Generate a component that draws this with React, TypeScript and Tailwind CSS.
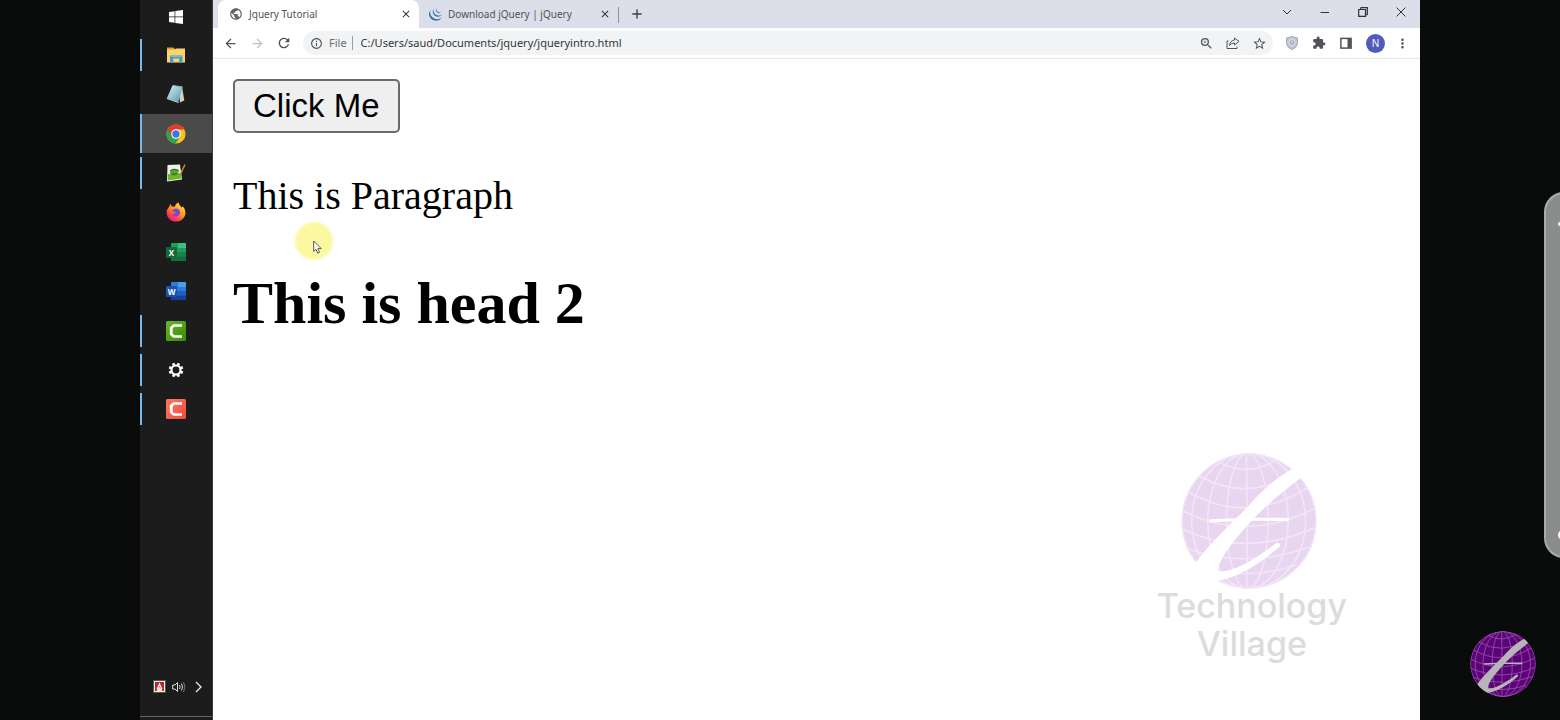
import type { ReactNode } from "react";
import {
  MdArrowBack,
  MdArrowForward,
  MdAdd,
  MdClose,
  MdExtension,
  MdInfoOutline,
  MdMoreVert,
  MdPublic,
  MdRefresh,
  MdStarBorder,
  MdZoomIn,
} from "react-icons/md";
import { SiJquery } from "react-icons/si";

const WindowsIcon = () => (
  <svg viewBox="0 0 14 14" className="size-3.5" fill="#fff">
    <path d="M0 2 5.6 1.2V6.6H0ZM6.3 1.1 14 0V6.6H6.3ZM0 7.3H5.6V12.8L0 12ZM6.3 7.3H14V14L6.3 12.9Z" />
  </svg>
);

const FolderIcon = () => (
  <svg viewBox="0 0 20 18" className="h-[18px] w-5">
    <path d="M1 1.5H7.5L9.5 3.5H18.5V7H1Z" fill="#e0a030" />
    <path d="M1 3.5H9L10 2.5H19V16.5H1Z" fill="#fcd364" />
    <path d="M4 17V9.5H16.5V17H13.2V12.6H7.3V17Z" fill="#4a9cbc" />
    <path d="M5 9.5H15.5V11H5Z" fill="#77bcd3" />
  </svg>
);

const NotepadIcon = () => (
  <svg viewBox="0 0 20 20" className="size-5">
    <defs>
      <linearGradient id="pad" x1="0" y1="0" x2="1" y2="1">
        <stop offset="0" stopColor="#d9f1f5" />
        <stop offset="1" stopColor="#4d98ad" />
      </linearGradient>
    </defs>
    <path d="M16 2.5 18.3 16.5 14 18.5 13 9Z" fill="#d6d0bd" />
    <path d="M6.5 1.5 16.5 3 12.5 18 1 14Z" fill="url(#pad)" />
    <path d="M1 14 12.5 18V19L1 15Z" fill="#e4e4dc" />
    <path d="M7 1.5 16.5 3" stroke="#a9b7b8" />
  </svg>
);

const ChromeIcon = () => (
  <svg viewBox="0 0 48 48" className="size-5">
    <circle cx="24" cy="24" r="23" fill="#fbc116" />
    <path d="M24 24 34 29.7 23 47A23 23 0 0 1 4 12.6Z" fill="#2da44e" />
    <path d="M4 12.6A23 23 0 0 1 44 13H24L14 29.7Z" fill="#e33b2e" />
    <circle cx="24" cy="24" r="11.5" fill="#fff" />
    <circle cx="24" cy="24" r="8.8" fill="#3478e5" />
  </svg>
);

const NotepadPlusIcon = () => (
  <svg viewBox="0 0 20 20" className="size-5">
    <path d="M1.5 2 14 1.5 16 16.5 1 18.5Z" fill="#eef1e8" />
    <path d="M2 11 15 10 15.4 15.5 1.8 17.5Z" fill="#70b52b" />
    <path d="M4 8C6 5 11 5 13 8L11 12C8 14 5 13 4 10Z" fill="#5ea637" />
    <path d="M4.5 7.5Q8 5 12.5 7.5M6 11H11" stroke="#2b5c1d" fill="none" />
    <path d="M19 1.5 14 12" stroke="#d4882b" strokeWidth="1.5" />
  </svg>
);

const FirefoxIcon = () => (
  <svg viewBox="0 0 20 20" className="size-5">
    <defs>
      <linearGradient id="fox" x1=".85" y1=".05" x2=".2" y2="1">
        <stop offset="0" stopColor="#ffe33e" />
        <stop offset=".45" stopColor="#ff9320" />
        <stop offset=".75" stopColor="#ff3b4e" />
        <stop offset="1" stopColor="#df158e" />
      </linearGradient>
    </defs>
    <path
      d="M3.5 4.5C3.4 3.5 4 2.3 4.4 2L6 4.7C7.3 4.3 8 4.4 8.8 4.8C9.3 2.8 10.8.8 12.6.5C12.8 2.8 14.5 3.7 16 5.8L16.6 4.3C18.7 6.3 19.7 9 19.4 11.7C18.7 16.4 14.7 19.6 10 19.6C4.8 19.6.6 15.5.6 10.4C.6 8.2 1.7 5.9 3.5 4.5Z"
      fill="url(#fox)"
    />
    <path d="M6 9.2C7 6.6 10.5 5.6 12.8 7.4C15 9.4 14.2 13 11.4 14.2C8.8 15 6.7 13.7 6.1 11.7C7.7 12.4 9 11.6 9.7 10.8C8.8 10 7.5 9.7 6 9.2Z" fill="#8044d3" />
  </svg>
);

function OfficeIcon({ letter, tones }: { letter: string; tones: string[] }) {
  return (
    <svg viewBox="0 0 20 20" className="size-5">
      <rect x="5" y="1" width="15" height="18" rx="1" fill={tones[0]} />
      <path d="M12 1H19Q20 1 20 2V6H12Z" fill={tones[1]} />
      <path d="M5 10H20V14.5H5Z" fill={tones[2]} />
      <path d="M5 14.5H20V18Q20 19 19 19H6Q5 19 5 18Z" fill={tones[3]} />
      <rect y="5" width="11" height="11" rx="1" fill={tones[4]} />
      <text x="5.5" y="13.5" textAnchor="middle" fontFamily="Open Sans, sans-serif" fontWeight="700" fontSize="8" fill="#fff">
        {letter}
      </text>
    </svg>
  );
}

function CamtasiaIcon({ from, to }: { from: string; to: string }) {
  return (
    <svg viewBox="0 0 20 20" className="size-5">
      <defs>
        <linearGradient id={"cam" + from.slice(1)} x1="0" y1="0" x2="1" y2="1">
          <stop offset="0" stopColor={from} />
          <stop offset="1" stopColor={to} />
        </linearGradient>
      </defs>
      <rect width="20" height="20" rx="1.5" fill={"url(#cam" + from.slice(1) + ")"} />
      <path d="M16 3.2V5.8H8.2L6.6 7.4V12.6L8.2 14.2H16V16.8H7.2L3.8 13.4V6.6L7.2 3.2Z" fill="#fff" />
    </svg>
  );
}

const GearIcon = () => (
  <svg viewBox="0 0 20 20" className="size-[18px]" fill="none" stroke="#fff">
    <circle cx="10" cy="10" r="5" strokeWidth="2.4" />
    <g strokeWidth="3">
      {[22.5, 67.5, 112.5, 157.5, 202.5, 247.5, 292.5, 337.5].map((a) => (
        <path key={a} d="M10 1.8V4.8" transform={`rotate(${a} 10 10)`} />
      ))}
    </g>
  </svg>
);

type App = { name: string; icon: ReactNode; running?: boolean; active?: boolean };

const apps: App[] = [
  { name: "File Explorer", icon: <FolderIcon />, running: true },
  { name: "Notepad", icon: <NotepadIcon /> },
  { name: "Chrome", icon: <ChromeIcon />, running: true, active: true },
  { name: "Notepad++", icon: <NotepadPlusIcon />, running: true },
  { name: "Firefox", icon: <FirefoxIcon /> },
  { name: "Excel", icon: <OfficeIcon letter="X" tones={["#219b5f", "#36c282", "#16834a", "#176b40", "#13683c"]} /> },
  { name: "Word", icon: <OfficeIcon letter="W" tones={["#2f7bd6", "#46a0ec", "#1f5fc0", "#163f96", "#1b53b4"]} /> },
  { name: "Camtasia", icon: <CamtasiaIcon from="#6ab52a" to="#3a8a04" />, running: true },
  { name: "Settings", icon: <GearIcon />, running: true },
  { name: "Recorder", icon: <CamtasiaIcon from="#ff7a63" to="#f04a3c" />, running: true },
];

function Taskbar() {
  return (
    <nav aria-label="Taskbar" className="flex w-[73px] shrink-0 flex-col border-r border-[#3c3c3c] bg-[#1c1c1c]">
      <button aria-label="Start" className="flex h-[35px] items-center justify-center pb-0.5">
        <WindowsIcon />
      </button>
      <div className="flex h-[394px] flex-col">
        {apps.map((a) => (
          <button
            key={a.name}
            aria-label={a.name}
            className={`flex flex-1 items-center ${a.active ? "bg-[#4a4a4a]" : ""}`}
          >
            <span className={`w-0.5 ${a.active ? "h-full" : "h-8"} ${a.running ? "bg-[#76b9ed]" : ""}`} />
            <span className="flex flex-1 justify-center pr-0.5">{a.icon}</span>
          </button>
        ))}
      </div>
      <div className="mt-auto mb-[3px] flex h-[42px] items-start justify-end gap-1.5 border-b border-[#666] pt-[5px] pr-1.5">
        <svg viewBox="0 0 13 13" className="size-[13px]">
          <rect width="13" height="13" fill="#2c6b47" />
          <rect x="1" y="1" width="11" height="11" fill="#f3e9e6" />
          <path d="M2 2H11V11H9.3L6.5 6.5 3.7 11H2Z" fill="#c3202a" />
          <path d="M4 9.5 6.5 4 9 9.5" fill="none" stroke="#fff" strokeWidth="1.2" />
        </svg>
        <svg viewBox="0 0 14 14" className="size-3.5" fill="none" stroke="#ddd">
          <path d="M.7 5H3L5.5 2.5V11.5L3 9H.7Z" />
          <path d="M7.5 5Q8.8 7 7.5 9M9.5 3.5Q11.6 7 9.5 10.5" />
          <path d="M11.5 2Q14.4 7 11.5 12" stroke="#777" />
        </svg>
        <svg viewBox="0 0 14 14" className="size-3.5" fill="none" stroke="#eee" strokeWidth="1.3">
          <path d="M4 2 9 7 4 12" />
        </svg>
      </div>
    </nav>
  );
}

function Globe({ id, fill, line, mark, className }: { id: string; fill: string; line: string; mark: string; className: string }) {
  return (
    <svg viewBox="130 40 406 406" className={className}>
      <clipPath id={id}>
        <circle cx="333" cy="243" r="202" />
      </clipPath>
      <g clipPath={`url(#${id})`}>
        <circle cx="333" cy="243" r="202" fill={fill} />
        <g fill="none" stroke={line} strokeWidth="5">
          <circle cx="333" cy="243" r="200" />
          <path d="M325 43Q329 240 326 445" />
          <ellipse cx="328" cy="243" rx="62" ry="202" />
          <ellipse cx="330" cy="243" rx="120" ry="202" />
          <ellipse cx="332" cy="243" rx="170" ry="202" />
          <path d="M240 65Q325 115 415 60" />
          <path d="M183 108Q325 188 470 100" />
          <path d="M150 155Q325 257 505 145" />
          <path d="M134 212Q325 310 530 205" />
          <path d="M134 268Q325 355 532 262" />
          <path d="M146 325Q325 389 515 320" />
          <path d="M190 382Q325 422 475 375" />
        </g>
        <path
          d="M468 84C400 122 365 160 330 200C280 250 220 305 172 370L145 415L220 460L236 422C300 412 360 375 424 320Q430 308 416 308C360 350 320 376 280 388C250 396 240 396 241 385C250 345 290 300 325 260C355 225 400 180 496 108Z"
          fill={mark}
        />
        <path d="M216 238C290 233 380 232 450 234Q456 239 450 244C380 241 290 242 218 248Q212 243 216 238Z" fill={mark} />
      </g>
    </svg>
  );
}

function Tab({ title, icon, active, className }: { title: string; icon: ReactNode; active?: boolean; className: string }) {
  return (
    <div className={`flex items-center ${active ? "rounded-t-lg bg-white" : ""} ${className}`}>
      {icon}
      <span className="flex-1 text-[10px] whitespace-nowrap text-[#505357]">{title}</span>
      <button aria-label={`Close ${title}`}>
        <MdClose className="size-3 text-[#333]" />
      </button>
    </div>
  );
}

function TabStrip() {
  return (
    <div className="flex h-7 bg-[#dcdfe9] pl-[5px]">
      <Tab
        title="Jquery Tutorial"
        active
        icon={<MdPublic className="mr-1.5 size-3.5 text-[#5f6368]" />}
        className="w-[201px] pr-[7px] pl-[11px]"
      />
      <Tab
        title="Download jQuery | jQuery"
        icon={<SiJquery className="mr-1.5 size-[13px] text-[#2a73b0]" />}
        className="w-[199px] pr-[7px] pl-2.5"
      />
      <span className="mt-[7px] h-4 w-px bg-[#8d9097]" />
      <button aria-label="New tab" className="pl-2.5">
        <MdAdd className="size-4 text-[#3c4043]" />
      </button>
      <div className="ml-auto flex items-center gap-7 pr-3.5 pb-1 text-[#333]">
        <button aria-label="Search tabs">
          <svg viewBox="0 0 10 10" className="size-2.5" fill="none" stroke="currentColor">
            <path d="M1 3 5 7 9 3" />
          </svg>
        </button>
        <button aria-label="Minimize">
          <svg viewBox="0 0 10 10" className="size-2.5" fill="none" stroke="currentColor">
            <path d="M.5 5.5H9" />
          </svg>
        </button>
        <button aria-label="Restore">
          <svg viewBox="0 0 10 10" className="size-2.5" fill="none" stroke="currentColor" strokeWidth="1.2">
            <path d="M.7 2.5H7.5V9.3H.7ZM2.5 2.5 3 .7H9.3V7.5L7.5 8" />
          </svg>
        </button>
        <button aria-label="Close window">
          <svg viewBox="0 0 10 10" className="size-2.5" fill="none" stroke="currentColor">
            <path d="M.5.5 9.5 9.5M9.5.5.5 9.5" />
          </svg>
        </button>
      </div>
    </div>
  );
}

function Toolbar() {
  return (
    <div className="flex h-[31px] items-center border-b border-[#e6e7e9] pl-2.5 text-[#505357]">
      <button aria-label="Back" className="mr-3">
        <MdArrowBack className="size-[15px]" />
      </button>
      <button aria-label="Forward" className="mr-[11px]">
        <MdArrowForward className="size-[15px] text-[#bfc1c4]" />
      </button>
      <button aria-label="Reload" className="mr-[11px]">
        <MdRefresh className="size-4" />
      </button>
      <div className="flex h-6 flex-1 items-center rounded-full bg-[#f1f3f4] pr-1.5 pl-[7px]">
        <MdInfoOutline className="mr-1.5 size-[13px]" />
        <label htmlFor="address" className="mr-[5px] text-[11px] text-[#6a6d71]">
          File
        </label>
        <span className="mr-2 h-3.5 w-px bg-[#9a9da1]" />
        <input
          id="address"
          defaultValue="C:/Users/saud/Documents/jquery/jqueryintro.html"
          className="min-w-0 flex-1 bg-transparent text-[11px] text-[#333639] outline-none"
        />
        <div className="flex items-center gap-3">
          <button aria-label="Zoom">
            <MdZoomIn className="size-[15px]" />
          </button>
          <button aria-label="Share">
            <svg viewBox="0 0 14 14" className="size-3.5" fill="none" stroke="currentColor" strokeLinejoin="round">
              <path d="M2.5 5H1V12.5H11V10.5" />
              <path d="M8.5 2 13 5.5 8.5 9V7Q5 7 3.5 9.5Q4 4.5 8.5 4Z" />
            </svg>
          </button>
          <button aria-label="Bookmark">
            <MdStarBorder className="size-[15px]" />
          </button>
        </div>
      </div>
      <div className="flex items-center gap-[13px] pr-2.5 pl-3">
        <button aria-label="Shield">
          <svg viewBox="0 0 14 14" className="size-3.5">
            <path d="M7 .5 12.5 2V7.5Q12 11.5 7 13.7Q2 11.5 1.5 7.5V2Z" fill="#c3c6d3" stroke="#a4a7b5" />
            <circle cx="7" cy="6.5" r="3" fill="#a6aabd" stroke="#e5e7ee" />
            <path d="M7 5V7.5" stroke="#eef0f5" />
          </svg>
        </button>
        <button aria-label="Extensions">
          <MdExtension className="size-3.5" />
        </button>
        <button aria-label="Side panel">
          <svg viewBox="0 0 14 14" className="size-3.5">
            <rect x="1.9" y="2.4" width="10.2" height="9.7" fill="none" stroke="currentColor" strokeWidth="1.5" />
            <path d="M8.5 2.4H12.1V12H8.5Z" fill="currentColor" />
          </svg>
        </button>
        <div className="flex items-center gap-2.5">
          <button aria-label="Profile" className="flex size-[19px] items-center justify-center rounded-full bg-[#4f5db8] text-[10px] text-white">
            N
          </button>
          <button aria-label="Menu">
            <MdMoreVert className="size-[15px]" />
          </button>
        </div>
      </div>
    </div>
  );
}

function Page() {
  return (
    <main className="relative flex-1 px-5 pt-5 text-black">
      <button className="h-[54px] rounded-[5px] border-2 border-[#6b6b6b] bg-[#efefef] px-[18px] pb-0.5 font-['Liberation_Sans',sans-serif] text-[33px] leading-none">
        Click Me
      </button>
      <p className="mt-10 font-['Liberation_Serif',serif] text-[40px] leading-[46px]">This is Paragraph</p>
      <h2 className="mt-[49px] font-['Liberation_Serif',serif] text-[60px] leading-[70px] font-bold">This is head 2</h2>

      <div className="absolute top-[163px] left-[82px] size-[38px] rounded-full bg-[#fbf8a2] blur-[1px]" />
      <svg viewBox="0 0 9 14" className="absolute top-[181px] left-[100px] h-3.5 w-[9px]">
        <path d="M.7 1V11.3L3 9.3 4.7 13.2 6.5 12.4 4.9 8.6H8.2Z" fill="#fff" stroke="#444" strokeWidth=".9" />
      </svg>

      <div className="absolute right-[73px] bottom-[57px] flex flex-col items-center text-center font-['Inter',sans-serif] text-[34px] leading-[38px] font-medium text-[#dcdcdc]">
        <Globe id="globe-light" fill="#e8d5ef" line="#f3e4f7" mark="#fff" className="-mb-0.5 mr-1.5 size-[136px]" />
        <span>
          Technology
          <br />
          Village
        </span>
      </div>
    </main>
  );
}

export default function App() {
  return (
    <div className="relative flex min-h-screen overflow-hidden bg-[#090c0b] px-[140px] font-['Noto_Sans','Open_Sans',sans-serif]">
      <Taskbar />
      <div className="flex min-w-0 flex-1 flex-col bg-white">
        <TabStrip />
        <Toolbar />
        <Page />
      </div>

      <aside className="absolute top-48 -right-6 h-[366px] w-10 rounded-[28px] border-2 border-[#a8abaa] bg-[#8b8d8c]">
        <span className="absolute top-7 left-3 size-1 rounded-full bg-white" />
        <span className="absolute bottom-4 left-3 size-2.5 rounded-full bg-white" />
      </aside>
      <Globe
        id="globe-dark"
        fill="#5d0379"
        line="#9457a6"
        mark="#b8b5ba"
        className="absolute right-6 bottom-[23px] size-[66px]"
      />
    </div>
  );
}
